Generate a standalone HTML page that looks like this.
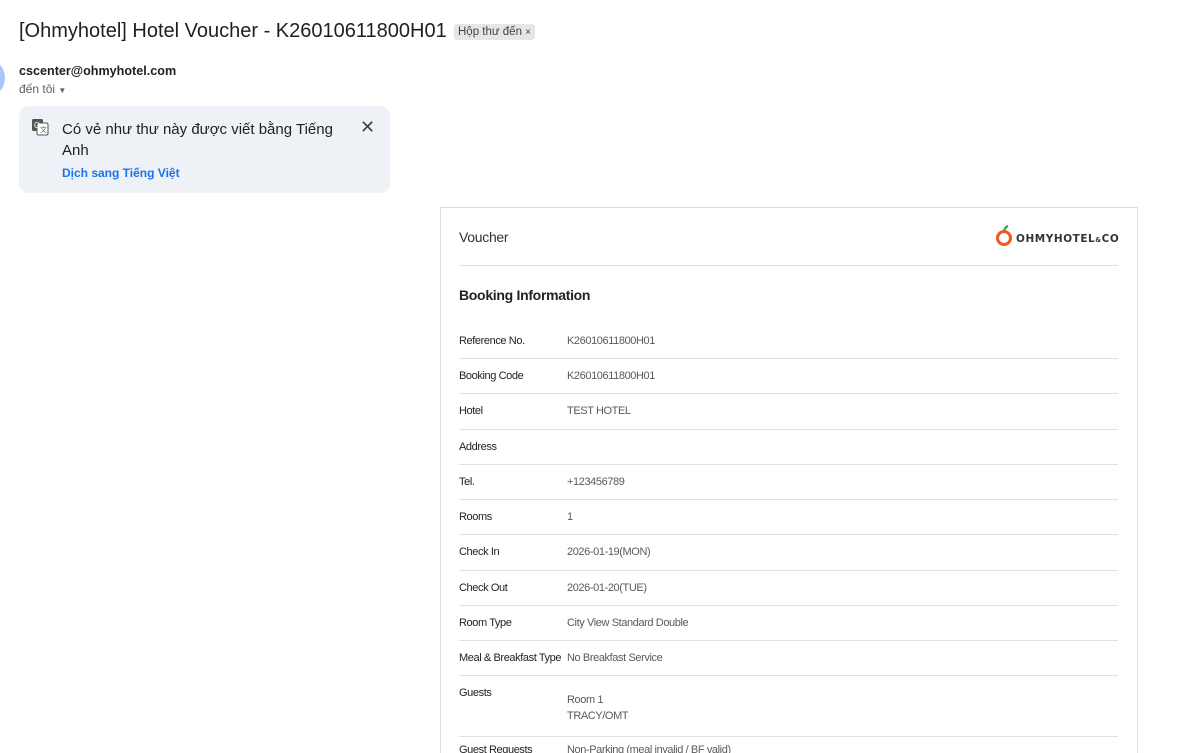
<!DOCTYPE html>
<html style="width:1196px;height:753px;overflow:hidden"><head><meta charset="utf-8"><style>
body{margin:0;width:1196px;height:753px;overflow:hidden;background:#fff;font-family:"Liberation Sans","Noto Sans CJK SC",sans-serif;position:relative;color:#1f1f1f}
.a{position:absolute;white-space:nowrap}
.lbl{position:absolute;left:459px;font-size:11px;color:#222;letter-spacing:-0.4px}
.val{position:absolute;left:567px;font-size:11px;color:#5a5a5a;letter-spacing:-0.4px}
.ln{position:absolute;left:459px;width:659px;height:1px;background:#e0e0e0}
</style></head><body>
<div class="a" style="left:19px;top:20px;font-size:20px;color:#1f1f1f">[Ohmyhotel] Hotel Voucher - K26010611800H01</div>
<div class="a" style="left:454px;top:24px;height:16px;padding:0 4px;background:#e6e6e6;border-radius:3px;font-size:11.5px;color:#444;line-height:16px">Hộp thư đến <span style="font-size:10px">×</span></div>
<div class="a" style="left:-35px;top:58px;width:40px;height:40px;border-radius:50%;background:#a8c7fa"></div>
<div class="a" style="left:19px;top:64px;font-size:12.6px;font-weight:bold;color:#1f1f1f">cscenter@ohmyhotel.com</div>
<div class="a" style="left:19px;top:82px;font-size:12px;color:#5e5e5e">đến tôi <span style="font-size:8px">▼</span></div>
<div class="a" style="left:19px;top:106px;width:371px;height:87px;background:#eef1f6;border-radius:10px"></div>
<svg class="a" style="left:31px;top:118px" width="18" height="18" viewBox="0 0 18 18"><rect x="1" y="1" width="11" height="12" rx="1.5" fill="#555"/><rect x="6" y="5" width="11" height="12" rx="1.5" fill="#fff" stroke="#555"/><text x="3" y="10" font-size="8" fill="#fff" font-family="Liberation Sans">G</text><text x="9" y="14" font-size="7" fill="#555" font-family="Liberation Sans">文</text></svg>
<div class="a" style="left:62px;top:119px;font-size:15px;color:#1f1f1f;line-height:21px">Có vẻ như thư này được viết bằng Tiếng<br>Anh</div>
<div class="a" style="left:360px;top:117px;font-size:18px;color:#444">✕</div>
<div class="a" style="left:62px;top:166px;font-size:12px;font-weight:bold;color:#1a73e8">Dịch sang Tiếng Việt</div>

<div class="a" style="left:440px;top:207px;width:696px;height:546px;border:1px solid #dcdcdc;border-bottom:none"></div>
<div class="a" style="left:459px;top:229px;font-size:14px;color:#333;letter-spacing:-0.3px">Voucher</div>
<svg class="a" style="left:995px;top:225px" width="20" height="24" viewBox="0 0 20 24"><circle cx="9" cy="13" r="6.5" fill="none" stroke="#f25a1d" stroke-width="3"/><path d="M9 6 Q10 2 13 1" stroke="#3a9a3a" stroke-width="2" fill="none"/></svg>
<div class="a" style="left:1016px;top:232px;font-size:11px;font-weight:bold;color:#333;letter-spacing:0.6px;font-family:'DejaVu Sans',sans-serif;transform:scale(0.95,1);transform-origin:left">OHMYHOTEL<span style="font-size:7px">&amp;</span>CO</div>
<div class="ln" style="top:265px"></div>
<div class="a" style="left:459px;top:287px;font-size:14px;font-weight:bold;color:#222;letter-spacing:-0.3px">Booking Information</div>

<div class="lbl" style="top:335px">Reference No.</div><div class="val" style="top:335px">K26010611800H01</div><div class="ln" style="top:358px"></div>
<div class="lbl" style="top:370px">Booking Code</div><div class="val" style="top:370px">K26010611800H01</div><div class="ln" style="top:393px"></div>
<div class="lbl" style="top:405px">Hotel</div><div class="val" style="top:405px">TEST HOTEL</div><div class="ln" style="top:429px"></div>
<div class="lbl" style="top:441px">Address</div><div class="ln" style="top:464px"></div>
<div class="lbl" style="top:476px">Tel.</div><div class="val" style="top:476px">+123456789</div><div class="ln" style="top:499px"></div>
<div class="lbl" style="top:511px">Rooms</div><div class="val" style="top:511px">1</div><div class="ln" style="top:534px"></div>
<div class="lbl" style="top:546px">Check In</div><div class="val" style="top:546px">2026-01-19(MON)</div><div class="ln" style="top:570px"></div>
<div class="lbl" style="top:582px">Check Out</div><div class="val" style="top:582px">2026-01-20(TUE)</div><div class="ln" style="top:605px"></div>
<div class="lbl" style="top:617px">Room Type</div><div class="val" style="top:617px">City View Standard Double</div><div class="ln" style="top:640px"></div>
<div class="lbl" style="top:652px">Meal &amp; Breakfast Type</div><div class="val" style="top:652px">No Breakfast Service</div><div class="ln" style="top:675px"></div>
<div class="lbl" style="top:687px">Guests</div><div class="val" style="top:692px;line-height:16px">Room 1<br>TRACY/OMT</div><div class="ln" style="top:736px"></div>
<div class="lbl" style="top:744px">Guest Requests</div><div class="val" style="top:744px">Non-Parking (meal invalid / BF valid)</div>
</body></html>
